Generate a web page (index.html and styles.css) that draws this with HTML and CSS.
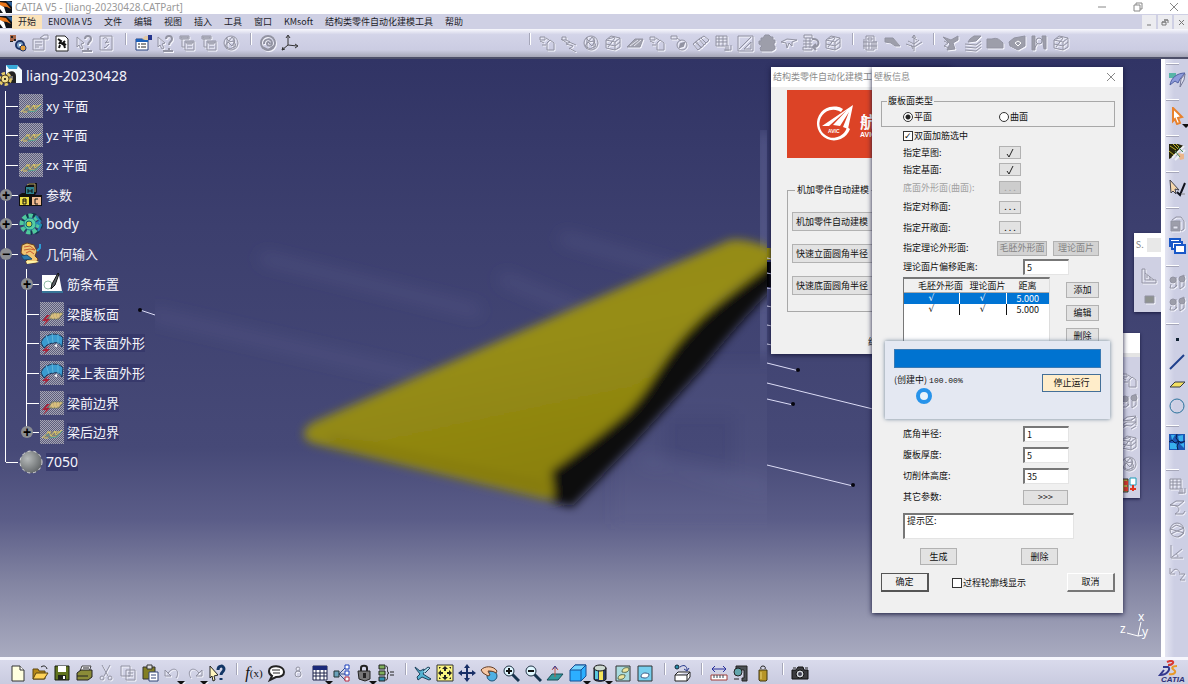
FILE: index.html
```html
<!doctype html>
<html lang=zh-CN>
<head>
	<meta charset=utf-8>
	<title>CATIA V5 - [liang-20230428.CATPart]</title>
	<link rel="stylesheet" href="styles.css">
</head>

<body>
	<svg class=defs width=0 height=0 aria-hidden=true>
		<defs>
			<pattern id=dither width=2 height=2 patternUnits=userSpaceOnUse>
				<rect width=2 height=2 fill="#5c5d7c"/>
				<path d="M0 0h1v1H0zM1 1h1v1H1z" fill="#a5a5b4"/>
			</pattern>
			<radialGradient id=ball cx=.35 cy=.35 r=.7>
				<stop offset=0 stop-color="#b6baba"/><stop offset=1 stop-color="#626668"/>
			</radialGradient>
		</defs>
		<symbol id=app viewBox="0 0 12 12"><path fill="#101218" d="M0 0h12v12H0z"/><path fill="#e8751a" d="M0 1 6 2l5 6-4-2-7-1z"/><path fill="#fff" d="m0 4 4 2 2 6H3L0 8z"/><path fill="#2b5d93" d="m6 0 6 1v5z"/></symbol>
		<symbol id=plane viewBox="0 0 24 24"><path fill="url(#dither)" d="M0 0h24v24H0z"/><path d="M3 18 9 11h13l-5 7z" fill="#858070" fill-opacity=.7 /><path d="m2 18 7-6 2 4 4-5 1 4 6-5M7 12h4m3 0h7M4 18h4m3-1h5" fill="none" stroke="#dcc868"/><path d="m9 18 8-1 5-6M6 15h3" fill="none" stroke="#4f9c98"/></symbol>
		<symbol id=face viewBox="0 0 24 24"><path fill="url(#dither)" d="M0 0h24v24H0z"/><path d="m8 17 4-6h11l-4 6z" fill="#c9ae7c" stroke="#6c7460"/><path d="M11 14h9m-6-2h8m-10 4h6" stroke="#e6d27c" stroke-dasharray="2 1"/><path d="m7 13-5 6h4l-3 5 7-7H6l4-4z" fill="#a82238"/></symbol>
		<symbol id=surface viewBox="0 0 24 24"><path fill="url(#dither)" d="M0 0h24v24H0z"/><path d="M1 12C3 3 18 0 23 7l-1 9c-2-4-5-5-8-4-4 0-8 2-10 5z" fill="#3b9bd0" stroke="#16365c"/><path d="m6 4 3 9m3-11 1 10m5-9v10" stroke="#5fb4da" fill="none"/><path d="m7 16-5 4h4l-3 4 7-6H6l4-3z" fill="#b21f35"/><path d="m14 15 3-2v3" fill="#fff"/></symbol>
		<symbol id=boxes viewBox="0 0 18 18"><path d="M2 3h5v3H2zM9 12V9l3-3 4 3v7H9zM2 7l4 2m2-5 3 2M4 11h4" /></symbol>
		<symbol id=chain viewBox="0 0 18 18"><path d="M2 3h4v3H2zm4 3 4 2-4 2 7 2-4 3m0-7 7 3m-7 3 7 4M1 5l6 4"/></symbol>
		<symbol id=gear viewBox="0 0 18 18"><circle cx=9 cy=9 r=7 /><path d="m4 4 3 3 3-4 3 4-3 5-4-4-3 4 5 3 6-3-2-5-6 1M5 3v12m7-12v12"/></symbol>
		<symbol id=dlist viewBox="0 0 18 18"><path d="M2 2h9v3H2zm5 5h9v9H7zm2 3h5m-5 3h5M4 5v8h3"/><path d="M3 3h7v1H3zm5 5h7v1H8z"/></symbol>
		<symbol id=qmark viewBox="0 0 18 18"><path d="m2 3 7 6-3 1 2 4-2 1-2-4-2 2z"/><path d="M10 5c0-4 6-4 6 0 0 3-3 2-3 6m0 3v2m-6 1h10" stroke-width=2 /></symbol>
		<symbol id=leaf viewBox="0 0 18 18"><path d="M1 13 9 5h8l-3 8z" fill="#a2a3af"/><path d="m4 12 8-6m-4 6 7-6" stroke="#e6e6f0"/></symbol>
		<symbol id=sheets viewBox="0 0 18 18"><path d="m2 12 5-3h9l-5 4zm0 3 5-3m4 4 5-3M2 8l5-4 9-1-4 4zM2 9v3m9-5 5-3v8"/></symbol>
		<symbol id=cage viewBox="0 0 18 18"><path d="m2 6 5-4 9 2v9l-5 3-9-2zm0 0 9 2 5-4m-5 4v8M2 10l9 2 5-4M4 5l7-2M4 13l7-9"/></symbol>
		<symbol id=grid viewBox="0 0 18 18"><path d="M2 2h11v10H2zm0 3h11M2 8h11M5 2v10m4-10v10m1 4h7v-5m-5 2v4m2-6v6"/></symbol>
		<symbol id=people viewBox="0 0 18 18"><path d="M8 4v10M3 11l-1 4h4l3-3m2-7 5-3v11l-4 3V9"/><circle cx=5 cy=7 r=3 fill="#9d9eaa"/><circle cx=14 cy=6 r=3 fill="#9d9eaa"/></symbol>
	</svg>

	<header class=titlebar>
		<svg class=app-icon><use href="#app"/></svg>
		<h1>CATIA V5 - [liang-20230428.CATPart]</h1>
		<div class=window-buttons>
			<button aria-label="minimize"><svg viewBox="0 0 10 10"><path d="M1 5h8"/></svg></button>
			<button aria-label="restore"><svg viewBox="0 0 10 10"><path d="M1 3h6v6H1zm2 0V1h6v6H7"/></svg></button>
			<button aria-label="close"><svg viewBox="0 0 10 10"><path d="m1 1 8 8m0-8L1 9"/></svg></button>
		</div>
	</header>

	<nav class=menubar>
		<svg class=app-icon><use href="#app"/></svg>
		<a href="#" class=active>开始</a>
		<a href="#">ENOVIA V5</a>
		<a href="#">文件</a>
		<a href="#">编辑</a>
		<a href="#">视图</a>
		<a href="#">插入</a>
		<a href="#">工具</a>
		<a href="#">窗口</a>
		<a href="#">KMsoft</a>
		<a href="#">结构类零件自动化建模工具</a>
		<a href="#">帮助</a>
		<div class=doc-buttons>
			<button aria-label="minimize document"><svg viewBox="0 0 10 10"><path d="M3 8h4"/></svg></button>
			<button aria-label="restore document"><svg viewBox="0 0 10 10"><path d="M2 5h4v3H2zm2-2h4v3M2 5h4M4 3h4"/></svg></button>
			<button aria-label="close document"><svg viewBox="0 0 10 10"><path d="m3 3 5 5m0-5L3 8"/></svg></button>
		</div>
	</nav>

	<!-- top toolbar -->
	<div class="toolbar top">
		<button aria-label="workbench"><svg viewBox="0 0 18 18"><path fill="#a86648" d="M1 1h6v6H1z"/><path fill="#222" d="M2 2h2v2H2zm3 3h2v2H5zM1 7h3v1H1z"/><circle cx=11 cy=11 r=4 fill="#82a7cc" stroke="#1e3568" stroke-width=2 /><circle cx=14 cy=14 r=3 fill="#e6a13c" stroke="#1e3568"/><path fill="#fff" d="M10 10h2v2h-2z"/></svg></button>
		<button class=off aria-label="sheet"><svg viewBox="0 0 18 18"><path d="M2 5h11v11H2zm2 3h7m-7 3h7m-7 2h4m1-9 4-3h4v4h-4z"/></svg></button>
		<button aria-label="replace"><svg viewBox="0 0 18 18"><path fill="#fff" stroke="#222" d="M3 2h9l3 3v12H3z"/><path d="m5 5 3 2-2 3m6-3-2 2 3 2m-7 3 1-3m5 3-1-3-3-2-1-2" fill="none" stroke="#111" stroke-width=2 /></svg></button>
		<button class=off aria-label="what is"><svg><use href="#qmark"/></svg></button>
		<button class=off aria-label="help page"><svg viewBox="0 0 18 18"><path d="M3 2h12v14H3zm3 3c2-3 6 0 4 2L8 9l4-1m-5 5 1 1 4-4"/></svg></button>
		<i class=sep></i>
		<button aria-label="properties"><svg viewBox="0 0 18 18"><path fill="#fff" stroke="#26407c" d="M2 5h12v11H2z"/><path fill="#1b60ba" d="M2 5h12v3H2z"/><path d="M4 10h2m1 0h5m-8 3h2m1 0h5" stroke="#222"/><path fill="#e3c9a4" d="m8 5 3-3h4v4h-4z"/><path fill="#24348c" d="M14 1h4v5h-4z"/></svg></button>
		<button class=off aria-label="pick"><svg><use href="#qmark"/></svg></button>
		<button class=off aria-label="list one"><svg><use href="#dlist"/></svg></button>
		<button class=off aria-label="list two"><svg><use href="#dlist"/></svg></button>
		<button class=off aria-label="web"><svg><use href="#gear"/></svg></button>
		<i class=sep></i>
		<button class=off aria-label="update"><svg viewBox="0 0 18 18"><circle cx=9 cy=9 r=7 stroke-width=2 /><path d="M5 10c0-6 8-6 8-1 0 3-4 4-5 1 0-3 3-2 3 0M3 13l6 3 6-4" stroke-width=2 /></svg></button>
		<button aria-label="axis"><svg viewBox="0 0 18 18"><path d="M7 2v9l9 1M7 11l-6 5M5 4l2-3 2 3m5 6 3 2-3 2M2 13l-1 3 3-1" fill="none" stroke="#333"/></svg></button>
		<div class=spring></div>
		<i class=sep></i>
		<button class=off aria-label="part"><svg><use href="#boxes"/></svg></button>
		<button class=off aria-label="chain"><svg><use href="#chain"/></svg></button>
		<button class=off aria-label="sphere"><svg><use href="#gear"/></svg></button>
		<button class=off aria-label="cage"><svg><use href="#cage"/></svg></button>
		<button class=off aria-label="leaf"><svg><use href="#leaf"/></svg></button>
		<button class=off aria-label="link part"><svg><use href="#boxes"/></svg></button>
		<button class=off aria-label="roll"><svg viewBox="0 0 18 18"><path d="M1 2h6v3H1zm6 2 4 3"/><circle cx=12 cy=11 r=5 /><path d="m10 13 1-3 3-1-1 3z" stroke-width=2 /></svg></button>
		<button class=off aria-label="mirror"><svg viewBox="0 0 18 18"><path d="m1 10 6-5 5 6-6 5zm2-2 7 6M7 5l5-3 5 4-5 5M9 4l5 5M4 7l5 7"/></svg></button>
		<button class=off aria-label="grid"><svg><use href="#grid"/></svg></button>
		<button class=off aria-label="trim"><svg viewBox="0 0 18 18"><path d="M2 2h15v15H2zm0 0m1 13L15 3m0 5-7 7h7z"/></svg></button>
		<button class=off aria-label="solid"><svg viewBox="0 0 18 18"><path fill="#9d9eaa" d="M3 4h2l2-3h4l2 2h2v3h2v3h-1v3h1v3l-3 2H3l-1-3 2-2-3-2V7h2z"/></svg></button>
		<button class=off aria-label="wing"><svg viewBox="0 0 18 18"><path d="m1 8 6-3 10 1-5 2v4L9 9 7 14 6 9z"/></svg></button>
		<button class=off aria-label="compare"><svg viewBox="0 0 18 18"><path d="M2 1h8v3H2zm2 3v10m4-10v10M1 7h9m-9 6h9v3H1zm0-3h9"/><path d="M10 5c9-1 8 9 1 8m3-3-3 3 3 3" stroke-width=2 /></svg></button>
		<button class=off aria-label="stack"><svg><use href="#cage"/></svg></button>
		<i class=sep></i>
		<button class=off aria-label="calc"><svg viewBox="0 0 18 18"><path d="M5 2h8v14H5zm2 2h4v2H7zm-5 4h14M2 12h14M8 8v7m3-7v7M3 5v10m12-8v8"/></svg></button>
		<button class=off aria-label="slope"><svg viewBox="0 0 18 18"><path fill="#9d9eaa" d="M2 8V4h8l7 8h-5L8 9z"/></svg></button>
		<button class=off aria-label="antenna"><svg viewBox="0 0 18 18"><path d="M9 1v16M7 4l2-3 2 3M1 10l8 3 8-5m-3-2-5 4-6-3m4-4 5 3m-4 9-2-4"/></svg></button>
		<i class=sep></i>
		<button class=off aria-label="fold"><svg viewBox="0 0 18 18"><path fill="#9d9eaa" d="m1 3 8 3 7-4v4l-5 3 2 6-8 1 3-6z"/><path d="m2 7 4 2-4 3 5 2"/></svg></button>
		<button class=off aria-label="layers"><svg viewBox="0 0 18 18"><path fill="#9d9eaa" d="m6 5 4-3h7l-5 5-8 1z"/><path d="m1 10 11 1 5-4M1 13l11 1 5-4M1 16l11 1 5-4"/></svg></button>
		<button class=off aria-label="block"><svg viewBox="0 0 18 18"><path fill="#9d9eaa" d="M1 5h5c5-2 8 1 11 4v5H1z"/></svg></button>
		<button class=off aria-label="hole"><svg viewBox="0 0 18 18"><path fill="#9d9eaa" d="m1 8 5-4 11-2v10l-7 4-8-4z"/><path d="m7 9 3-2 3 2-3 3z" stroke="#fff"/></svg></button>
		<button class=off aria-label="inspect"><svg viewBox="0 0 18 18"><path fill="#9d9eaa" d="M2 2h3v14H2zm10 0h4v13h-2z"/><circle cx=9 cy=7 r=3 /><path d="m7 10-3 5"/></svg></button>
		<button class=off aria-label="box"><svg><use href="#cage"/></svg></button>
	</div>

	<main class=workspace>
		<section class=viewport>
			<svg class=scene>
				<defs>
					<filter id=soft x="-10%" y="-10%" width="120%" height="120%"><feGaussianBlur stdDeviation=5 /></filter>
					<filter id=haze x="-20%" y="-50%" width="140%" height="200%"><feGaussianBlur stdDeviation=8 /></filter>
					<clipPath id=patch><path d="M155 71h612v400H155z"/></clipPath>
					<linearGradient id=skin x1=0 y1=0 x2=.4 y2=1>
						<stop offset=0 stop-color="#938810"/><stop offset=.5 stop-color="#968d15"/><stop offset=1 stop-color="#8a800d"/>
					</linearGradient>
				</defs>
				<g clip-path="url(#patch)">
					<g filter="url(#haze)" fill="none" stroke="#6c70a0" stroke-opacity=.22 stroke-width=12>
						<path d="m150 255 280 65M260 198l220 55m80-75 210 60M500 218l120 50M640 400l130 30"/>
						<path d="M640 330h120v110H640z" stroke-width=50 stroke-opacity=.12 />
					</g>
					<path filter="url(#haze)" fill="#8085b8" d="M762 71h6v225h-6z"/>
					<g filter="url(#soft)">
						<path fill="#0c0b0e" d="M780 196v26c-30 30-54 58-78 88l-62 68-68 70-22-6v-32l60-80z"/>
						<path fill="url(#skin)" d="M312 364 728 182q12-4 40 6l8 4v8c-30 24-60 42-82 66-34 34-44 66-68 88-28 24-50 40-75 58l3 27-10 1-232-56q-16-8 0-20z"/>
						<path d="m330 379 215 48" stroke="#817509" stroke-width=4 fill="none"/>
					</g>
				</g>
				<path fill="#918709" d="M767 189h5v12h-5z"/>
				<path fill="#000" d="M767 203h5v25h-5z"/>
				<path d="m767 199 5 1m-5 14 5 1m-5 14 5 1m-5 17 5 1m-5 18 5 1m-5 18 5 1M140 251l15 5m612 48 32 8m-32 12 110 27m-110-11 26 6m-26 60 86 21" stroke="#dcdcf6" fill="none"/>
				<g fill="#05050f"><circle cx=140 cy=251 r=2 /><circle cx=798 cy=311 r=2 /><circle cx=793 cy=345 r=2 /><circle cx=853 cy=426 r=2 /></g>
			</svg>

			<ul class=tree>
				<li class=root><svg class=icon viewBox="0 0 24 24"><path fill="#f5fbff" d="M6 1h11l5 5v13H6z"/><path fill="#38a8d8" d="M6 1h12l-1 4H9z"/><path d="M6 11c4-6 10-4 10 1v7H6z" fill="#222" /><path d="M9 12h4v4H9z" fill="#777"/><circle cx=5 cy=15 r=5 fill="none" stroke="#e3c868" stroke-width=4 stroke-dasharray="3 2"/><circle cx=5 cy=15 r=4 fill="#f0dc8e" stroke="#57461c"/><circle cx=5 cy=15 r=1 /></svg><span class=latin>liang-20230428</span></li>
				<li><i class=twig></i><svg class=icon><use href="#plane"/></svg><span>xy 平面</span></li>
				<li><i class=twig></i><svg class=icon><use href="#plane"/></svg><span>yz 平面</span></li>
				<li><i class=twig></i><svg class=icon><use href="#plane"/></svg><span>zx 平面</span></li>
				<li><i class=twig><button aria-label="expand">+</button></i><svg class=icon viewBox="0 0 24 24"><path fill="#111" d="m6 4 4-4h8v9l-2 3h7v11H0V12l3-2h3z"/><path d="M7 4h8v7H7z" fill="#2e8390"/><path d="m8 2 2-1h6v8" fill="none" stroke="#b5a56c"/><path d="M1 14h9v8H1z" fill="#eadb45"/><path d="M13 14h9v8h-9z" fill="#efbc91"/><path d="M9 6v4m4-4v4M9 8h4M4 16v5h3v-5zm0 2h3m12-2h-3v5h3" fill="none" stroke="#111"/></svg><span>参数</span></li>
				<li><i class=twig><button aria-label="expand">+</button></i><svg class=icon viewBox="0 0 24 24"><circle cx=13 cy=12 r=9 fill="none" stroke="#10364c" stroke-width=4 stroke-dasharray="4 3"/><circle cx=11 cy=12 r=8 fill="none" stroke="#4fc89c" stroke-width=5 stroke-dasharray="4 2"/><circle cx=11 cy=12 r=6 fill="#55cda2" stroke="#208197"/><circle cx=10 cy=12 r=3 fill="#c9d64a" stroke="#105b69"/><path d="m17 4 4 5-3 2 4 2-3 6" fill="none" stroke="#2289b5" stroke-width=2 /></svg><span class=latin>body</span></li>
				<li><i class=twig><button aria-label="collapse">−</button></i><svg class=icon viewBox="0 0 24 24"><path d="m3 3 5-2 7 2 3 6-2 5 3 3-2 4H7l1-5-6-5z" fill="#f0c672" stroke="#69401e"/><path d="m5 5 6-1 5 4-5-1-6 1m2 3 4-2 4 3" fill="none" stroke="#c65b32"/><path d="m2 14 6-1 5 4-8 1z" fill="#2e7bab" stroke="#184a71"/><path d="m18 9 3-3V2" fill="none" stroke="#2e9bd3" stroke-width=2 /><path fill="#fff3a6" d="M7 19h11l2 1-12 2z"/></svg><span>几何输入</span></li>
				<li><i class=rail></i><i class=twig><button aria-label="expand">+</button></i><svg class=icon viewBox="0 0 24 24"><path fill="#fff" d="M2 3h17l3 16H2z"/><path d="M2 20h21" stroke="#31a8bf"/><circle cx=8 cy=13 r=4 fill="none" stroke="#93bba6"/><path d="m18 1-6 11-1 5 4-4 4-11z" fill="#596064" stroke="#111"/></svg><span>筋条布置</span></li>
				<li><i class=rail></i><i class=twig></i><svg class=icon><use href="#face"/></svg><span class=lit>梁腹板面</span></li>
				<li><i class=rail></i><i class=twig></i><svg class=icon><use href="#surface"/></svg><span class=lit>梁下表面外形</span></li>
				<li><i class=rail></i><i class=twig></i><svg class=icon><use href="#surface"/></svg><span class=lit>梁上表面外形</span></li>
				<li><i class=rail></i><i class=twig></i><svg class=icon><use href="#face"/></svg><span class=lit>梁前边界</span></li>
				<li><i class=rail></i><i class="twig end"><button aria-label="expand">+</button></i><svg class=icon><use href="#plane"/></svg><span class=lit>梁后边界</span></li>
				<li><i class="twig end"></i><svg class=icon viewBox="0 0 24 24"><circle cx=12 cy=12 r=11 fill="url(#ball)" stroke="#dcdcdc" stroke-dasharray="3 3"/></svg><span class="latin lit">7050</span></li>
			</ul>

			<svg class=compass viewBox="0 0 30 34"><path d="M21 12 18 26 7 23m11 3 5-1" fill="none" stroke="#fff"/><text x=18 y=11>x</text><text x=0 y=23>z</text><text x=22 y=26>y</text></svg>

			<!-- floating windows -->
			<section class="window tools-window">
				<h2>结构类零件自动化建模工具</h2>
				<div class=banner>
					<svg viewBox="0 0 40 40"><path d="M29 5A17 17 0 1 0 36 25l-3-2A14 14 0 1 1 27 8z" fill="#fff"/><path d="M8 22 39 1l-5 24-5-2 6-15-9 14-7-1L33 6 15 22z" fill="#fff"/><text x=14 y=29>AVIC</text></svg>
					<p><b>航空</b><small>AVIC</small></p>
				</div>
				<fieldset>
					<legend>机加零件自动建模</legend>
					<button>机加零件自动建模</button>
					<button>快速立面圆角半径</button>
					<button>快速底面圆角半径</button>
				</fieldset>
				<p class=finish>结束</p>
			</section>

			<section class="palette long">
				<header></header>
				<svg class=off><use href="#boxes"/></svg>
				<svg class=off><use href="#people"/></svg>
				<svg class=off><use href="#sheets"/></svg>
				<svg class=off><use href="#cage"/></svg>
				<svg class=off><use href="#gear"/></svg>
				<svg viewBox="0 0 18 18"><path fill="#b9a33c" stroke="#333" d="M1 3h7v13H1z"/><path fill="#d43a2a" d="M4 5h4v4H4zm0 6h4v4H4z"/><path fill="#fff" stroke="#1d9ab8" d="M10 2h6v7h-6z"/><path d="M13 9v6m-3-2h6" stroke="#e0331e" stroke-width=2 /></svg>
			</section>

			<section class="palette short">
				<header>S.<i></i></header>
				<svg class=off viewBox="0 0 18 18"><path d="M2 2h3v11h11v3H2zm3 4 9 7M7 8v3m3-1v3"/></svg>
				<svg class=off viewBox="0 0 18 18"><path fill="#8f9391" d="M5 5h9v7H5z"/></svg>
			</section>

			<form class="window panel-window">
				<h2>壁板信息<button type=button class=close aria-label="close"><svg viewBox="0 0 10 10"><path d="m1 1 8 8m0-8L1 9"/></svg></button></h2>
				<fieldset>
					<legend>腹板面类型</legend>
					<label><input type=radio name=kind checked>平面</label>
					<label><input type=radio name=kind>曲面</label>
				</fieldset>
				<div class=fields>
					<label><input type=checkbox checked>双面加筋选中</label>
					<div class=row><label for=sketch>指定草图:</label><button type=button id=sketch class=pick><svg viewBox="0 0 10 10"><path d="m2 6 2 3 4-8"/></svg></button></div>
					<div class=row><label for=base>指定基面:</label><button type=button id=base class=pick><svg viewBox="0 0 10 10"><path d="m2 6 2 3 4-8"/></svg></button></div>
					<div class="row disabled"><label for=bottom>底面外形面(曲面):</label><button type=button id=bottom class=pick disabled>. . .</button></div>
					<div class=row><label for=symmetry>指定对称面:</label><button type=button id=symmetry class=pick>. . .</button></div>
					<div class=row><label for=open>指定开敞面:</label><button type=button id=open class=pick>. . .</button></div>
					<div class=row><label for=rough>指定理论外形面:</label><button type=button id=rough class=named disabled>毛胚外形面</button><button type=button class=named disabled>理论面片</button></div>
					<div class="row value"><label for=offset>理论面片偏移距离:</label><input type=text id=offset value=5></div>
				</div>
				<div class=offsets>
					<div class=list>
						<table>
							<thead><tr><th>毛胚外形面</th><th>理论面片</th><th>距离</th></tr></thead>
							<tbody>
								<tr class=selected><td>√</td><td>√</td><td>5.000</td></tr>
								<tr><td>√</td><td>√</td><td>5.000</td></tr>
							</tbody>
						</table>
					</div>
					<div class=actions>
						<button type=button>添加</button>
						<button type=button>编辑</button>
						<button type=button>删除</button>
					</div>
				</div>
				<div class=sizes>
					<div class="row value"><label for=radius>底角半径:</label><input type=text id=radius value=1></div>
					<div class="row value"><label for=thickness>腹板厚度:</label><input type=text id=thickness value=5></div>
					<div class="row value"><label for=height>切削体高度:</label><input type=text id=height value=35></div>
					<div class="row value"><label for=more>其它参数:</label><button type=button id=more>&gt;&gt;&gt;</button></div>
				</div>
				<textarea aria-label="提示区">提示区:</textarea>
				<div class=make>
					<button type=button>生成</button>
					<button type=button>删除</button>
				</div>
				<footer>
					<button type=button class=default>确定</button>
					<label><input type=checkbox>过程轮廓线显示</label>
					<button type=button>取消</button>
				</footer>
			</form>

			<section class=progress-window>
				<div class=bar></div>
				<div class=status>
					<p>(创建中) <span>100.00%</span><i class=spinner></i></p>
					<button>停止运行</button>
				</div>
			</section>
		</section>

		<aside class=sidebar>
			<i class=sep></i>
			<button aria-label="surface design"><svg viewBox="0 0 18 18"><path fill="#57b5a7" d="M1 2h7v5H1z"/><path fill="#8e9bdb" stroke="#5060a2" d="M2 14C3 7 9 2 17 2l-5 6-2 4-3-2z"/><path d="m12 16 1-8 4-5-1 6z" fill="#dfe0f0" stroke="#777a98"/></svg></button>
			<i class=sep></i>
			<button class=drop aria-label="select"><svg viewBox="0 0 18 18"><path fill="#fff" stroke="#e8822e" stroke-width=2 d="m5 1 9 9-4 1 2 5-3 1-2-5-2 2z"/></svg></button>
			<i class=sep></i>
			<button aria-label="render"><svg viewBox="0 0 18 18"><path fill="#26250c" d="M1 1h9l6 2-7 9-8 4z"/><path d="m2 3 6 4M5 1l5 5M1 8l5 4M8 1l3 3" stroke="#bdaf28"/><path d="m4 15 12-12M7 17 17 7" stroke="#eff2f6" stroke-width=2 /><path fill="#ebb68c" d="m10 10 6 1v5l-4 1z"/><path d="m10 4 5 5M7 8l5 6" stroke="#4f8e5a"/></svg></button>
			<i class=sep></i>
			<button aria-label="sketcher"><svg viewBox="0 0 18 18"><path fill="#f6d7ac" stroke="#44444e" d="m2 1 9 10-4-1 1 5-3-3-2 2z"/><path d="m9 13 3 3 5-12" fill="none" stroke="#11131d" stroke-width=2 /><path d="M13 15h4" stroke="#888"/></svg></button>
			<i class=sep></i>
			<button class=off aria-label="material"><svg viewBox="0 0 18 18"><path fill="#9d9eaa" d="M3 6h9v10H3z"/><path d="m4 5 4-3h5l3 4v8l-3 2"/><path d="M5 11h5v3H5z" fill="#e4e5ef"/></svg></button>
			<button aria-label="windows"><svg viewBox="0 0 18 18"><path fill="#fff" stroke="#1858c8" stroke-width=2 d="M2 2h10v7H2z"/><path fill="#fff" stroke="#1858c8" stroke-width=2 d="M4 5h10v7H4z"/><path fill="#fff" stroke="#1858c8" stroke-width=2 d="M7 8h10v8H7z"/></svg></button>
			<i class=sep></i>
			<button class=off aria-label="users one"><svg><use href="#people"/></svg></button>
			<button class=off aria-label="users two"><svg><use href="#people"/></svg></button>
			<i class=sep></i>
			<button aria-label="point"><svg viewBox="0 0 18 18"><path fill="#123" d="M8 7h3v3H8z"/></svg></button>
			<button aria-label="line"><svg viewBox="0 0 18 18"><path d="M2 16 16 2" stroke="#1e3f8c" stroke-width=2 /></svg></button>
			<button aria-label="plane"><svg viewBox="0 0 18 18"><path fill="#f3df62" stroke="#343b48" d="m2 12 5-5h10l-5 5z"/></svg></button>
			<button aria-label="circle"><svg viewBox="0 0 18 18"><circle cx=9 cy=9 r=7 fill="none" stroke="#2c739d"/></svg></button>
			<i class=sep></i>
			<button aria-label="mesh"><svg viewBox="0 0 18 18"><path fill="#1c57b4" d="M1 1h16v16H1z"/><path fill="#38b1ed" d="M2 10h5l2 2v4H2zm8-7 5-1v6h-4zM3 2h4L4 7zm9 9 4-1v5z"/><path d="m1 9 3-2 3 3 4-2 2 2 4-2M9 1 8 5l3 4-2 4 1 4" stroke="#071d48" fill="none"/></svg></button>
			<i class="sep far"></i>
			<button class=off aria-label="grid"><svg><use href="#grid"/></svg></button>
			<button class=off aria-label="sweep"><svg viewBox="0 0 18 18"><path d="m2 6 6-4h8l-6 5zm0 0c9 0 12 5 5 9h8l2-3"/></svg></button>
			<button class=off aria-label="sphere"><svg viewBox="0 0 18 18"><circle cx=9 cy=9 r=7 /><path d="m2 8 6-4 8 3-7 3zm1 5 6-3 7 2-6 4"/></svg></button>
			<button class=off aria-label="angle"><svg viewBox="0 0 18 18"><path d="M3 2v13h12M4 14 14 6m-4 8c0-2-1-3-2-3"/></svg></button>
			<button class=off aria-label="join"><svg viewBox="0 0 18 18"><path d="M2 3v6h5M3 8c4-6 7-4 9 0m-1 1h6l-5 6h5"/></svg></button>
		</aside>
	</main>

	<!-- bottom toolbar -->
	<div class="toolbar bottom">
		<button aria-label="new"><svg viewBox="0 0 18 18"><path fill="#ffffdf" stroke="#333" d="M3 2h8l4 4v11H3z"/><path d="M11 2v4h4" fill="#fff" stroke="#333"/></svg></button>
		<button aria-label="open"><svg viewBox="0 0 18 18"><path fill="#b68716" stroke="#5d4610" d="M2 5h5l1 2h6v8H2z"/><path fill="#ffd257" stroke="#5d4610" d="m5 9h12l-4 6H2z"/><path d="M10 3c3-2 5-1 6 2" fill="none" stroke="#222"/></svg></button>
		<button aria-label="save"><svg viewBox="0 0 18 18"><path fill="#61741e" stroke="#171e10" d="M2 2h14v14H2z"/><path fill="#fff" d="M5 2h8v6H5z"/><path fill="#20251a" d="M5 11h8v5H5z"/><path fill="#fff" d="M10 12h2v3h-2z"/></svg></button>
		<button aria-label="print"><svg viewBox="0 0 18 18"><path fill="#f7f7fa" stroke="#444" d="m5 7 2-5h9l-2 6z"/><path fill="#8b8c38" stroke="#222" d="m2 9 4-3h11v7l-4 3H2z"/><path d="M2 12h11m-5-8h6" stroke="#222"/></svg></button>
		<button class=off aria-label="cut"><svg viewBox="0 0 18 18"><path d="m5 1 6 11m2-11L7 12"/><circle cx=5 cy=14 r=2 /><circle cx=13 cy=14 r=2 /></svg></button>
		<button class=off aria-label="copy"><svg viewBox="0 0 18 18"><path d="M2 2h9v10H2zm5 4h9v10H7zm2 3h5m-5 3h5"/></svg></button>
		<button aria-label="paste"><svg viewBox="0 0 18 18"><path fill="#827e22" stroke="#333" d="M2 3h12v12H2z"/><path fill="#ddd" stroke="#333" d="M6 1h5v4H6z"/><path fill="#fff" stroke="#334577" d="M8 8h9v9H8z"/><path d="M10 11h5m-5 3h5" stroke="#334577"/></svg></button>
		<button class="off drop" aria-label="undo"><svg viewBox="0 0 18 18"><path d="M2 6v6h6zm3 3c6-8 13-2 8 5"/></svg></button>
		<button class="off drop wide" aria-label="redo"><svg viewBox="0 0 18 18"><path d="M16 6v6h-6zm-3 3C7 1 0 7 5 14"/></svg></button>
		<button aria-label="help"><svg viewBox="0 0 18 18"><path fill="#fff5bd" stroke="#222" d="m2 2 8 9-4 1 1 4-2 1-1-5-2 2z"/><path d="M10 6c0-5 6-5 6-1 0 3-3 3-3 6m0 3v2" fill="none" stroke="#123666" stroke-width=3 /></svg></button>
		<i class=sep></i>
		<button class=fx aria-label="formula"><i>f</i>(x)</button>
		<button aria-label="comment"><svg viewBox="0 0 18 18"><path fill="#fff" stroke="#222" stroke-width=2 d="M2 7c0-7 15-6 15 1 0 3-3 5-8 5l-6 3 2-4c-2-1-3-3-3-5z"/><path d="M5 6h8m-7 3h7" stroke="#222"/></svg></button>
		<button class=off aria-label="node"><svg viewBox="0 0 18 18"><circle cx=9 cy=5 r=2 /><circle cx=9 cy=10 r=3 /></svg></button>
		<button class=drop aria-label="table"><svg viewBox="0 0 18 18"><path fill="#fff" stroke="#1c234b" d="M2 2h14v14H2z"/><path fill="#1b2a7a" d="M2 2h14v4H2z"/><path d="M2 9h14M2 12h14M5 6v10m4-10v10m4-10v10" stroke="#1c234b"/></svg></button>
		<button aria-label="graph"><svg viewBox="0 0 18 18"><path d="M6 10h6m-6 0 6-6m-6 6 6 6" stroke="#355088"/><path fill="#6aa2ba" stroke="#233" d="M1 7h5v6H1z"/><path fill="#fff" stroke="#1a3ebb" d="M12 1h4v4h-4zm0 6h4v4h-4z"/><path fill="#fff" stroke="#b32842" d="M12 13h4v4h-4z"/></svg></button>
		<button class=drop aria-label="lock"><svg viewBox="0 0 18 18"><path fill="none" stroke="#222" stroke-width=2 d="M6 8V4c0-3 6-3 6 0v4"/><path fill="#777" stroke="#222" d="M3 7h12v8l-5 2-6-2z"/><path fill="#222" d="M8 9h3v5H8z"/></svg></button>
		<button aria-label="rule"><svg viewBox="0 0 18 18"><path fill="#7faf5c" stroke="#222" d="M2 1h6v4H2zm0 6h6v4H2z"/><path fill="#3490af" stroke="#222" d="M2 13h6v4H2z"/><path d="M9 2c3 0 0 7 3 7-3 0 0 7-3 7m4-8h4m-4 3h4" fill="none" stroke="#222"/></svg></button>
		<i class=sep></i>
		<button aria-label="fly"><svg viewBox="0 0 18 18"><path fill="#55b4d3" stroke="#1e425d" d="m1 3 5 4 4-2 1 2-2 3 8 5-2 1-7-3-4 3-1-3 3-3-4-5z"/><path d="m9 7 5-4 2 1-5 5" fill="#a9dceb" stroke="#1e425d"/></svg></button>
		<button aria-label="fit all"><svg viewBox="0 0 18 18"><path fill="#fbf581" stroke="#333" d="M1 1h16v16H1z"/><path d="M9 4v3m0 4v3M4 9h3m4 0h3" stroke="#222" stroke-width=2 /><path fill="#222" d="m9 2 3 3H6zm0 14 3-3H6zM2 9l3-3v6zm14 0-3-3v6zM3 3h2L3 5zm12 0h-2l2 2zM3 15h2l-2-2zm12 0h-2l2-2z"/></svg></button>
		<button aria-label="pan"><svg viewBox="0 0 18 18"><path d="M9 2v14M2 9h14" stroke="#182f66" stroke-width=2 /><path fill="#182f66" d="M9 0 6 4h6zm0 18-3-4h6zM0 9l4-3v6zm18 0-4-3v6z"/></svg></button>
		<button aria-label="rotate"><svg viewBox="0 0 18 18"><circle cx=12 cy=12 r=5 fill="#4fb0e4" stroke="#1d5174"/><path fill="#f7c8a4" stroke="#633d26" d="M1 6c3-4 12-5 16 1l-1 2c-3-2-5-2-8-2l2 4-2 1-5-3z"/></svg></button>
		<button aria-label="zoom in"><svg viewBox="0 0 18 18"><path d="m10 10 7 7" stroke="#17344e" stroke-width=3 /><circle cx=7 cy=7 r=5 fill="#dff7ff" stroke="#234"/><path d="M7 4v6M4 7h6" stroke="#111" stroke-width=2 /></svg></button>
		<button aria-label="zoom out"><svg viewBox="0 0 18 18"><path d="m10 10 7 7" stroke="#17344e" stroke-width=3 /><circle cx=7 cy=7 r=5 fill="#dff7ff" stroke="#234"/><path d="M4 7h6" stroke="#111" stroke-width=2 /></svg></button>
		<button aria-label="normal view"><svg viewBox="0 0 18 18"><path fill="#329a9e" stroke="#174c56" d="m1 16 5-6h11l-5 6z"/><path d="M9 13V2M6 6l3-4 3 4" fill="none" stroke="#c35442"/><path d="m7 5 2-3 2 3" fill="none" stroke="#3c459d"/></svg></button>
		<button class="drop wide" aria-label="isometric"><svg viewBox="0 0 18 18"><path fill="#2cafff" stroke="#164e94" d="m1 6 5-5h11v11l-5 5H1z"/><path fill="#74d5ff" stroke="#164e94" d="m1 6 5-5h11l-5 5z"/><path d="M12 6v11" stroke="#164e94"/></svg></button>
		<button class="drop" aria-label="shading"><svg viewBox="0 0 18 18"><path fill="#2c3b65" stroke="#111" d="M3 4v11c0 3 12 3 12 0V4z"/><path fill="#f5e45b" d="M8 5h4v11H8z"/><path fill="#5ac8dd" d="M4 5h3v10H4z"/><ellipse cx=9 cy=4 rx=6 ry=3 fill="#cddad2" stroke="#111"/></svg></button>
		<button class=wide aria-label="hide"><svg viewBox="0 0 18 18"><path fill="#a9dbdf" stroke="#333" d="M2 2h14v15H2z"/><path fill="#eee59d" stroke="#576a4d" d="M8 8c0-4 4-5 7-4 0 4-3 5-7 4zm-4 7c0-4 3-5 7-4 0 4-3 5-7 4z"/></svg></button>
		<button aria-label="swap space"><svg viewBox="0 0 18 18"><path fill="#77cfee" stroke="#333" d="M2 2h14v15H2z"/><path fill="#fff" stroke="#3b5a83" d="M5 13c0-4 4-5 8-3 0 4-4 5-8 3z"/></svg></button>
		<i class=sep></i>
		<button aria-label="catalog"><svg viewBox="0 0 18 18"><circle cx=4 cy=3 r=2 fill="#2792ac" stroke="#123"/><path fill="#fff" stroke="#222" d="m2 11 3-3h12v5l-3 4H2zm0 0h12l3-3m-3 3v6"/><path d="M7 3c4-3 7-1 7 3m-3-1 3 2 2-3" fill="none" stroke="#24368a"/></svg></button>
		<i class=sep></i>
		<button aria-label="measure"><svg viewBox="0 0 18 18"><path d="M2 5h14M5 2 2 5l3 3m8-6 3 3-3 3" fill="none" stroke="#282e9b"/><path fill="#fff" stroke="#a13f3b" d="M1 11h16v5H1z"/><path d="M4 11v3m3-3v3m3-3v3m3-3v3" stroke="#345"/></svg></button>
		<button aria-label="caliper"><svg viewBox="0 0 18 18"><path fill="#4b5055" stroke="#222" d="M4 2h11v15h-5v-3h2V6H4z"/><circle cx=6 cy=8 r=4 fill="#62a6ac" stroke="#222"/><path d="M2 15h5" stroke="#222"/></svg></button>
		<button aria-label="inertia"><svg viewBox="0 0 18 18"><path fill="none" stroke="#222" d="M7 5c-2-4 6-4 4 0"/><path fill="#b79528" stroke="#403610" d="M5 6h8v10l-1 1H6l-1-1z"/><path d="M7 8v7" stroke="#ead477"/></svg></button>
		<i class=sep></i>
		<button aria-label="capture"><svg viewBox="0 0 18 18"><path fill="#3c3c40" stroke="#111" d="M1 6h4l2-3h5l1 3h4v9H1z"/><circle cx=9 cy=10 r=4 fill="#d4d8dc" stroke="#111"/><circle cx=9 cy=10 r=2 fill="#445"/><path d="M2 4h3m9 0h3" stroke="#222"/></svg></button>
		<div class=spring></div>
		<svg class=brand viewBox="0 0 32 26"><path d="M11 2c4-2 7-1 6 1s-3 2-5 2" fill="none" stroke="#d83a35" stroke-width=2 /><path d="M7 7h5c3 1 0 8-8 8l4-5" fill="none" stroke="#33398e" stroke-width=2 /><path d="M21 6c-5 0-6 2-3 4s0 5-5 4" fill="none" stroke="#e79a2a" stroke-width=2 /><text x=5 y=22>CATIA</text></svg>
	</div>
</body>
</html>
```
FILE: styles.css
```css
html, body {
	width: 100%;
	height: 100%;
	margin: 0;
}

body {
	display: flex;
	flex-direction: column;
	overflow: hidden;
	background: #cfd0e4;
	color: #111;
	font: 9px/12px "Noto Sans CJK SC", sans-serif;
}

*, ::before, ::after {box-sizing: border-box}
h1, h2, p, ul {margin: 0; padding: 0; font-weight: normal}
ul {list-style: none}
.defs {position: absolute}

button, input, textarea {
	font: inherit;
	color: inherit;
	margin: 0;
	padding: 0;
	border-radius: 0;
}

/* title and menu */

.titlebar {
	display: flex;
	align-items: center;
	flex: none;
	height: 14px;
	overflow: hidden;
	background: #fff;

	h1 {
		flex: 1;
		padding-left: 3px;
		color: #999;
		font: 10px/14px "Noto Sans", sans-serif;
		align-self: start;
	}
}

.app-icon {
	width: 12px;
	height: 12px;
	flex: none;
}

.window-buttons {
	display: flex;
	gap: 26px;
	padding-right: 9px;

	& button {
		width: 10px;
		height: 10px;
		border: none;
		background: none;
		display: flex;
	}

	svg {fill: none; stroke: #888}
}

.menubar {
	display: flex;
	align-items: center;
	flex: none;
	height: 15px;

	a {
		padding: 0 6px;
		line-height: 14px;
		color: #1c1c28;
		text-decoration: none;
	}

	.active {background: #fbe3ba}
}

.doc-buttons {
	display: flex;
	margin-left: auto;
	gap: 2px;

	& button {
		width: 14px;
		height: 14px;
		border: none;
		background: #ececf0;
	}

	svg {width: 10px; height: 10px; fill: none; stroke: #777; display: block; margin: auto}
}

/* toolbars */

.toolbar {
	display: flex;
	align-items: center;
	flex: none;
	background: linear-gradient(#f8f8fd, #d3d4e8 20%, #cbcce2 75%, #a5a6b6);

	& button {
		width: 22px;
	}
}

.toolbar button, .sidebar button {
	position: relative;
	display: flex;
	align-items: center;
	justify-content: center;
	flex: none;
	height: 22px;
	border: none;
	background: none;

	svg {width: 18px; height: 18px}
}

.top {
	height: 30px;
	padding: 0 116px 0 7px;
	border-bottom: 2px solid #4d4f69;
}

.bottom {
	height: 27px;
	padding: 2px 0 0 7px;
	border-top: 3px solid #f6f6fd;
	background: linear-gradient(#d9daec, #c9cbe0);

	.wide {width: 23px}
}

.spring {flex: 1}

.toolbar .sep {
	width: 2px;
	height: 12px;
	margin: 0 5px 8px 8px;
	border-left: 1px solid #a5a6b9;
	border-right: 1px solid #fff;
}

.off {
	fill: none;
	stroke: #9293a2;
	filter: drop-shadow(1px 1px 0 #f5f5fc);
}

.drop::after {
	content: "";
	position: absolute;
	right: -2px;
	bottom: -1px;
	border: 4px solid transparent;
	border-top-color: #111;
	border-bottom: none;
}

.toolbar .fx {
	font: 11px "Liberation Serif", serif;

	i {font-size: 16px}
}

.brand {
	width: 32px;
	height: 26px;
	flex: none;

	text {font: italic bold 8px "Liberation Sans", sans-serif; fill: #2a2e76}
}

.workspace {
	display: flex;
	flex: 1;
	min-height: 0;
}

.sidebar {
	display: flex;
	flex-direction: column;
	align-items: center;
	flex: none;
	width: 27px;
	overflow: hidden;
	padding-top: 4px;
	border-left: 4px solid #fff;
	background: linear-gradient(90deg, #e4e5f2, #cdcfe4 40%);

	& button {width: 22px}

	.sep {
		width: 13px;
		height: 2px;
		margin: 8px 8px 4px 0;
		border-top: 1px solid #fff;
		border-bottom: 1px solid #a5a6b9;
		flex: none;

		&:first-child {margin-top: 0}
		&.far {margin-top: 16px}
	}
}

/* 3D view */

.viewport {
	position: relative;
	flex: 1;
	overflow: hidden;
	background: linear-gradient(#313465, #3c3f6e 28%, #464977 65%, #5b5d88 77%, #8486a3 88%, #a9abc0);
}

.scene {
	position: absolute;
	inset: 0;
	width: 100%;
	height: 100%;
}

.tree {
	position: relative;
	display: grid;
	grid-auto-rows: 1fr;
	width: 200px;
	height: 416px;
	margin-top: 2px;
	color: #f4f4fb;
	font-size: 13px;
	line-height: 18px;

	li {
		display: flex;
		align-items: center;
	}

	.icon {
		width: 24px;
		height: 24px;
		flex: none;
		margin-right: 3px;
	}

	.root .icon {margin-right: 2px}
	.latin {font: 14px/18px "Noto Sans", sans-serif}
	.lit {background: #37396b}
}

.twig, .rail {
	position: relative;
	flex: none;
	align-self: stretch;
	width: 19px;

	&::before {
		content: "";
		position: absolute;
		left: 5px;
		top: 0;
		width: 1px;
		height: 100%;
		background: #fff;
	}
}

.rail {width: 21px}
.end::before {height: 50%}

.twig {
	display: flex;
	align-items: center;

	&::after {
		content: "";
		position: absolute;
		left: 6px;
		top: 50%;
		width: 12px;
		height: 1px;
		background: #fff;
	}

	& button {
		position: relative;
		z-index: 1;
		width: 12px;
		height: 12px;
		border: none;
		border-radius: 50%;
		background: #8b8d92;
		color: #000;
		font: bold 14px/10px "Liberation Sans", sans-serif;
	}
}

.compass {
	position: absolute;
	right: 11px;
	bottom: 13px;
	width: 30px;
	height: 34px;

	text {font: 12px "Noto Sans", sans-serif; fill: #fff}
}

/* windows */

.window {
	position: absolute;
	top: 8px;
	background: #f0f0f0;
	box-shadow: 0 1px 5px #15173a;

	h2 {
		display: flex;
		justify-content: space-between;
		align-items: center;
		height: 20px;
		padding: 0 2px;
		background: #fff;
		color: #8b8b8b;
		font-size: 9px;
		white-space: nowrap;
	}

	& button, .named {
		border: 1px solid #b2b2b2;
		background: #e2e2e2;
	}

	& fieldset {
		margin: 0;
		padding: 0;
		border: 1px solid #a8a8a8;
		min-width: 0;
	}
}

.tools-window {
	left: 771px;
	width: 180px;
	height: 287px;

	& fieldset {
		display: flex;
		flex-direction: column;
		gap: 13px;
		margin: 26px 0 0 16px;
		padding: 16px 4px 16px;

		button {
			height: 19px;
			padding: 0 3px;
			text-align: left;
		}
	}

	legend {margin-left: 3px}
	.finish {padding: 24px 0 0 97px}
}

.banner {
	display: flex;
	align-items: center;
	height: 68px;
	margin: 3px 0 0 16px;
	padding-left: 27px;
	background: #dc4326;
	color: #fff;

	svg {width: 40px; height: 40px}
	text {font: bold 5px "Liberation Sans", sans-serif; fill: #fff}
	p {padding-left: 6px}
	b {display: block; font-size: 16px; line-height: 20px}
	small {font: bold 7px "Liberation Sans", sans-serif; display: block}
}

.panel-window {
	left: 872px;
	width: 251px;
	height: 546px;

	& fieldset {
		display: flex;
		margin: 8px 8px 0 9px;
		padding: 4px 0 3px 21px;

		label {width: 96px}
	}

	legend {margin-left: -16px; padding: 0 1px}

	label {
		display: flex;
		align-items: center;
		gap: 1px;
	}

	.close {
		width: 10px;
		height: 10px;
		margin-right: 5px;
		border: none;
		background: none;
		display: flex;

		svg {fill: none; stroke: #888}
	}

	input[type=radio], input[type=checkbox] {
		appearance: none;
		width: 10px;
		height: 10px;
		border: 1px solid #333;
		background: #fff;
	}

	input[type=radio] {
		border-radius: 50%;

		&:checked {background: radial-gradient(#222 2px, #fff 3px)}
	}

	input[type=checkbox]:checked::before {
		content: "✓";
		display: block;
		font: 9px/8px "DejaVu Sans", sans-serif;
	}

	input[type=text], textarea {
		border: 1px solid #e4e4e4;
		border-top: 2px solid #777;
		border-left: 2px solid #777;
		background: #fff;
		padding: 0 2px;
	}

	input[type=text] {width: 46px; height: 16px}
}

.fields {
	display: grid;
	grid-template-rows: 17px 17px 17px 19px 20px 21px 20px 18px;
	padding-left: 31px;
}

.row {
	display: flex;
	align-items: center;

	label {width: 96px; flex: none}
	.pick {
		width: 22px;
		height: 13px;
		line-height: 10px;

		svg {width: 10px; height: 10px; display: block; margin: auto; fill: none; stroke: #222}
	}

	.named {
		width: 50px;
		height: 15px;
		margin-left: -2px;
		background: #d3d3d3;
		color: #828282;
		white-space: nowrap;

		+ .named {width: 46px; margin-left: 6px}
	}

	&.value label {width: 120px}
	&.value button {width: 45px; height: 15px}
}

.disabled {
	color: #a0a0a0;

	.pick {background: #cdcdcd}
}

.offsets {
	display: flex;
	gap: 16px;
	height: 150px;
	padding: 1px 0 0 31px;
}

.list {
	width: 147px;
	height: 110px;
	border: 1px solid #ddd;
	border-top: 2px solid #777;
	border-left: 1px solid #777;
	background: #fff;

	table {
		width: 100%;
		border-collapse: collapse;
		table-layout: fixed;
		text-align: center;
		line-height: 11px;
	}

	th {
		height: 13px;
		padding: 0;
		background: #f0f0f0;
		border-bottom: 1px solid #aaa;
		font-weight: normal;
		white-space: nowrap;
	}

	th:first-child {width: 55px; padding-left: 14px}
	th:nth-child(2) {width: 47px; padding-left: 10px}

	td {
		height: 11px;
		padding: 0;
		border-right: 1px solid;
		font-family: "DejaVu Sans", sans-serif;

		&:last-child {border: none; font-family: inherit}
	}

	.selected {background: #0074d4; color: #fff}
}

.actions {
	display: flex;
	flex-direction: column;
	gap: 7px;
	padding-top: 5px;

	& button {width: 33px; height: 16px; line-height: 12px}
}

.sizes {
	display: grid;
	gap: 5px;
	padding-left: 31px;

	.row {height: 16px}
}

.panel-window textarea {
	display: block;
	width: 171px;
	height: 26px;
	margin: 8px 0 0 31px;
	resize: none;
}

.make {
	display: flex;
	gap: 64px;
	padding: 9px 0 0 48px;

	& button {width: 37px; height: 17px}
}

.panel-window footer {
	display: flex;
	align-items: center;
	justify-content: space-between;
	padding: 8px 8px 0 9px;

	label {margin-right: 18px}

	& button {
		width: 48px;
		height: 19px;
		background: #f0f0f0;
		border: 1px solid #fff;
		border-right: 2px solid #777;
		border-bottom: 2px solid #777;

		&.default {border: 1px solid #555; border-right-width: 2px; border-bottom-width: 2px}
	}
}

.progress-window {
	position: absolute;
	left: 885px;
	top: 282px;
	width: 225px;
	height: 78px;
	padding: 8px 9px;
	background: #e4e8f2;
	box-shadow: 0 0 4px #6a7f96;

	.bar {
		height: 19px;
		border: 1px solid #3a7ab4;
		background: #0073d0;
	}

	.status {
		display: flex;
		justify-content: space-between;
		padding-top: 6px;
	}

	span {font: 8px "Liberation Mono", monospace}

	& button {
		width: 59px;
		height: 18px;
		border: 1px solid #446f98;
		background: #ffedca;
	}
}

.spinner {
	display: block;
	width: 16px;
	height: 16px;
	margin: 2px 0 0 22px;
	border: 4px solid #2793ea;
	border-radius: 50%;
	background: #e9f3fb;
}

.palette {
	position: absolute;
	display: flex;
	flex-direction: column;
	align-items: center;
	background: #cfd0e3;
	box-shadow: 0 1px 3px #1a1b40;

	header {
		display: flex;
		align-items: center;
		align-self: stretch;
		justify-content: space-around;
		height: 24px;
		background: #fff;
		color: #888;

		i {width: 14px; height: 14px; background: #e8e8e8}
	}

	svg {width: 18px; height: 18px}
}

.short {
	left: 1134px;
	top: 174px;
	width: 29px;
	height: 79px;
	gap: 6px;

	header {margin-bottom: 4px}
}

.long {
	left: 1110px;
	top: 274px;
	width: 30px;
	height: 165px;
	gap: 3px;
	padding-left: 8px;

	header {margin: 0 0 11px -8px; border-bottom: 4px solid #e4e4e4}
	svg {flex: none}
}
```
